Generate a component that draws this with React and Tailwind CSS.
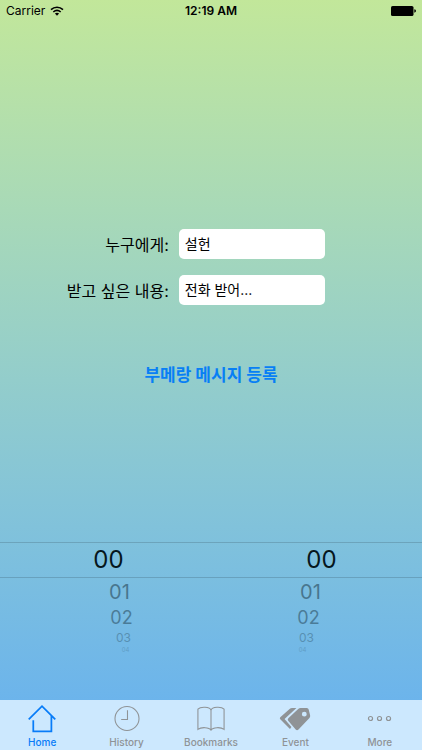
import { useState } from "react";

const TABS = [
  { id: "home", label: "Home" },
  { id: "history", label: "History" },
  { id: "bookmarks", label: "Bookmarks" },
  { id: "event", label: "Event" },
  { id: "more", label: "More" },
];

const TabIcon = ({ id }) => {
  const common = {
    viewBox: "0 0 32 32",
    fill: "none",
    stroke: "currentColor",
    className: "w-8 h-8",
    "aria-hidden": true,
  };

  if (id === "home") {
    return (
      <svg {...common} strokeWidth="1.8">
        <path d="M2.3 17 16 3.3 29.7 17M7 17.8V29.2H25.7V13.5" />
      </svg>
    );
  }
  if (id === "history") {
    return (
      <svg {...common} strokeWidth="1.1">
        <circle cx="16" cy="16" r="12.4" />
        <path d="M16.5 7.5V17H10" />
      </svg>
    );
  }
  if (id === "bookmarks") {
    return (
      <svg {...common} strokeWidth="1.1">
        <path d="M16 28V7.5C15 3.5 5 3.5 2.5 6.3V27.3C6 24.5 14 25 16 28C18 25 26 24.5 29.5 27.3V6.3C27 3.5 17 3.5 16 7.5" />
      </svg>
    );
  }
  if (id === "event") {
    return (
      <svg {...common} stroke="none">
        <path
          fill="currentColor"
          d="M13 5.2H17.5L5.2 16.5L12.3 24.8L10.8 26.8L.8 16.9Q-.2 15.7.8 14.6L10.4 6.1Q11.5 5.2 13 5.2Z"
        />
        <path
          fill="currentColor"
          fillRule="evenodd"
          d="M21.8 5.2L28.2 5.2Q29.8 5.2 30.1 6.8L31.6 12.6Q32 14.2 30.9 15.4L19.6 27.4Q18.1 28.9 16.7 27.4L9 18.3Q7.9 16.9 9.1 15.7L19.3 6.2Q20.4 5.2 21.8 5.2ZM25.6 9A2.5 2.5 0 1 0 25.6 14A2.5 2.5 0 1 0 25.6 9Z"
        />
      </svg>
    );
  }
  return (
    <svg {...common} strokeWidth="1.2">
      <circle cx="6.2" cy="16" r="2.1" />
      <circle cx="15.5" cy="16" r="2.1" />
      <circle cx="24.8" cy="16" r="2.1" />
    </svg>
  );
};

const StatusBar = () => (
  <header className="grid grid-cols-3 items-center h-5 pt-[2px] px-[6px] text-[12px] leading-4">
    <div className="flex items-center gap-[5px]">
      <span>Carrier</span>
      <svg viewBox="0 0 14 10" className="w-[14px] h-[10px]" aria-hidden="true">
        <path
          d="M1 3.7C4.4.5 9.6.5 13 3.7M3.3 6C5.5 4 8.5 4 10.7 6"
          fill="none"
          stroke="currentColor"
          strokeWidth="1.6"
        />
        <path d="M7 9.8 4.9 7.6Q7 5.9 9.1 7.6Z" fill="currentColor" />
      </svg>
    </div>
    <span className="text-center font-semibold">12:19 AM</span>
    <svg
      viewBox="0 0 25 10"
      className="w-[25px] h-[10px] justify-self-end"
      aria-hidden="true"
    >
      <rect width="22.5" height="10" rx="1.6" fill="currentColor" />
      <path d="M23.3 3.3Q25 3.6 25 5T23.3 6.7Z" fill="currentColor" />
    </svg>
  </header>
);

const Field = ({ id, label, value, onChange }) => (
  <div className="flex items-center">
    <label
      htmlFor={id}
      className="w-2/5 pl-2 pt-[2px] text-right text-[16px] leading-6"
    >
      {label}
    </label>
    <input
      id={id}
      type="text"
      value={value}
      onChange={(e) => onChange(e.target.value)}
      className="ml-[10px] w-[146px] h-[30px] pl-[6px] pb-[2px] rounded-[5px] bg-white text-[14px] focus:outline-none"
    />
  </div>
);

// rows get smaller and fainter as the wheel turns away
const WHEEL_ROWS = [
  {
    value: "00",
    row: "h-9 text-[24px] leading-9 text-[#06171d]",
    left: "pl-[6px]",
    right: "pl-[10px]",
  },
  {
    value: "01",
    row: "h-7 text-[20px] leading-7 opacity-50",
    left: "pl-7",
    right: "pr-3",
  },
  {
    value: "02",
    row: "h-6 text-[18px] leading-6 opacity-45",
    left: "pl-8",
    right: "pr-4",
  },
  {
    value: "03",
    row: "h-4 text-[12px] leading-4 opacity-30",
    left: "pl-9",
    right: "pr-5",
  },
  {
    value: "04",
    row: "h-2 text-[6px] leading-2 opacity-20",
    left: "pl-10",
    right: "pr-7",
  },
];

const WheelColumn = ({ label, side }) => (
  <div
    role="listbox"
    aria-label={label}
    className="flex flex-1 flex-col items-center text-[#17313d]"
  >
    {WHEEL_ROWS.map((item, index) => (
      <div
        key={item.value}
        role="option"
        aria-selected={index === 0}
        className={`${item.row} ${item[side]}`}
      >
        {item.value}
      </div>
    ))}
  </div>
);

export default function App() {
  const [name, setName] = useState("설헌");
  const [message, setMessage] = useState("전화 받어...");
  const [tab, setTab] = useState("home");

  return (
    <div className="flex flex-col min-h-screen bg-linear-to-b from-[#c2e79a] to-[#66b0f0] text-black font-[Inter,'Noto_Sans_CJK_KR',sans-serif]">
      <StatusBar />

      <main className="flex flex-1 flex-col">
        <form
          className="flex flex-col pt-[209px]"
          onSubmit={(e) => e.preventDefault()}
        >
          <div className="flex flex-col gap-4">
            <Field
              id="name"
              label="누구에게:"
              value={name}
              onChange={setName}
            />
            <Field
              id="message"
              label="받고 싶은 내용:"
              value={message}
              onChange={setMessage}
            />
          </div>
          <button
            type="submit"
            className="self-center mt-[58px] text-[17px] leading-6 font-bold text-[#087ff5]"
          >
            부메랑 메시지 등록
          </button>
        </form>

        {/* Time wheel, the first row is the selected one */}
        <div className="mt-auto pb-[46px]">
          <div className="relative flex">
            <div className="absolute inset-x-0 top-0 h-9 border-y border-black/15 pointer-events-none" />
            <WheelColumn label="Hour" side="left" />
            <WheelColumn label="Minute" side="right" />
          </div>
        </div>
      </main>

      <nav className="flex h-[50px] bg-[#cce8fe]">
        {TABS.map(({ id, label }) => (
          <button
            key={id}
            type="button"
            onClick={() => setTab(id)}
            aria-current={tab === id ? "page" : undefined}
            className={`flex flex-1 flex-col items-center pt-[3px] ${
              tab === id ? "text-[#087cf8]" : "text-[#8f9396]"
            }`}
          >
            <TabIcon id={id} />
            <span className="text-[10px] leading-4 font-medium">{label}</span>
          </button>
        ))}
      </nav>
    </div>
  );
}
